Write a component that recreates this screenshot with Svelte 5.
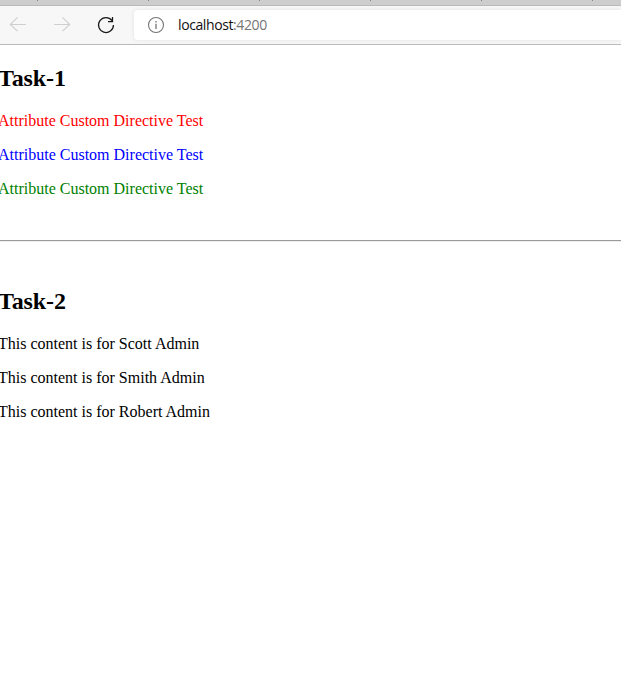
<script>
  const tabs = [0, 1, 2, 3, 4, 5];
  const notes = ['red', 'blue', 'green'];
  const people = ['Scott', 'Smith', 'Robert'];
</script>

<div class="window">
  <div class="tabs">
    {#each tabs as tab (tab)}<i></i>{/each}
  </div>
  <header class="toolbar">
    <svg class="back" width="18" height="16" viewBox="0 0 18 16" fill="none" stroke="#cfcfcf" stroke-width="1.1">
      <path d="M17 8.5H1.3M8.5 1.3L1.3 8.5L8.5 15.2" />
    </svg>
    <svg class="forward" width="18" height="16" viewBox="0 0 18 16" fill="none" stroke="#cfcfcf" stroke-width="1.1">
      <path d="M1 8.5H16.7M9.5 1.3L16.7 8.5L9.5 15.2" />
    </svg>
    <svg class="reload" width="18" height="18" viewBox="0 0 18 18" fill="none" stroke="#191919" stroke-width="1.25">
      <path d="M15 4.6A7.45 7.45 0 1 0 16.45 9M15.5 1V5.5H11" />
    </svg>
    <div class="address">
      <svg width="18" height="18" viewBox="0 0 18 18" fill="none" stroke="#757575">
        <circle cx="9" cy="9" r="7.5" stroke-width="1.1" />
        <path d="M9 7.8V13M9 5V6.5" stroke-width="1.3" />
      </svg>
      <span class="url">localhost<span class="port">:4200</span></span>
    </div>
  </header>
  <main>
    <h2>Task-1</h2>
    {#each notes as color (color)}
      <p class={color}>Attribute Custom Directive Test</p>
    {/each}
    <hr />
    <h2>Task-2</h2>
    {#each people as name (name)}
      <p>This content is for {name} Admin</p>
    {/each}
  </main>
</div>

<style>
  .window {
    height: 700px;
    overflow: hidden;
    background: #fff;
  }
  .tabs {
    box-sizing: border-box;
    height: 6px;
    display: flex;
    gap: 110px;
    padding-left: 37px;
    background: #cdcdcd;
    border-bottom: 1px solid #bababa;
    overflow: hidden;
  }
  .tabs i {
    flex: none;
    width: 1px;
    height: 1px;
    background: #858585;
  }
  .toolbar {
    box-sizing: border-box;
    height: 39px;
    display: flex;
    align-items: flex-start;
    background: #f7f7f7;
    border-bottom: 1px solid #bababa;
    overflow: hidden;
  }
  svg {
    display: block;
    flex: none;
  }
  .back {
    margin: 10px 0 0 9px;
  }
  .forward {
    margin: 10px 0 0 26px;
  }
  .reload {
    margin: 10px 0 0 26px;
  }
  .address {
    flex: 1;
    box-sizing: border-box;
    height: 30px;
    display: flex;
    align-items: center;
    margin: 4px 0 0 19px;
    padding-left: 13px;
    background: #fff;
    border-radius: 4px 0 0 4px;
    box-shadow: 0 0 4px rgba(0, 0, 0, 0.09);
  }
  .url {
    margin-left: 13px;
    font: 14px/20px "Open Sans", "Noto Sans", sans-serif;
    letter-spacing: -0.4px;
    color: #111;
    white-space: nowrap;
  }
  .port {
    color: #757575;
  }
  main {
    padding-top: 20px;
    margin-left: -2px;
    font: 16px/18px "Liberation Serif", "Times New Roman", serif;
    color: #000;
  }
  h2 {
    margin: 0 0 20px;
    font-size: 24px;
    line-height: 27px;
    letter-spacing: -0.1px;
  }
  p {
    margin: 0 0 16px;
    white-space: nowrap;
  }
  hr {
    height: 0;
    margin: 42px 0 46px;
    border: 0;
    border-top: 1px solid #9a9a9a;
    border-bottom: 1px solid #eee;
  }
  .red {
    color: #f00;
  }
  .blue {
    color: #00f;
  }
  .green {
    color: #008000;
  }
</style>
